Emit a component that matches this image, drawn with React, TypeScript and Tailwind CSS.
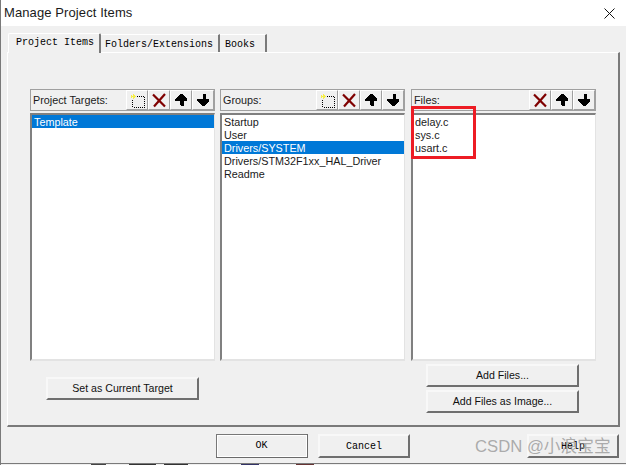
import React from 'react';

const sans = 'font-["Liberation_Sans",Arial,sans-serif]';
const mono = 'font-["Liberation_Mono","Noto_Sans_CJK_SC",monospace]';

const NewIcon = () => (
  <svg width="16" height="16" viewBox="0 0 16 16" shapeRendering="crispEdges">
    <path d="M6 4.5h9.5v10.5H3.5V8" fill="none" stroke="#000" strokeDasharray="1 1" />
    <path d="M4 2v5M1.5 4.5h5M2.5 3v1M5.5 3v1M2.5 5v1M5.5 5v1" fill="none" stroke="#f6ee4a" strokeWidth="1" />
  </svg>
);

const DeleteIcon = () => (
  <svg width="16" height="16" viewBox="0 0 16 16">
    <path d="M2 2.5L14 14.5M14 2L3 14.5" stroke="#7f0000" strokeWidth="2.2" fill="none" />
  </svg>
);

const UpIcon = () => (
  <svg width="14" height="14" viewBox="0 0 14 14" shapeRendering="crispEdges">
    <path d="M7 1h1l5 5v2H10v5H7v-1H6V8H1V6l1-1 1-1 1-1 1-1z" fill="#000" />
  </svg>
);

const DownIcon = () => (
  <svg width="14" height="14" viewBox="0 0 14 14" shapeRendering="crispEdges">
    <path d="M7 1h3v5h3v2l-5 5H7L1 8V6h6V2H7z" fill="#000" />
  </svg>
);

const ToolButton = ({ children }: { children: React.ReactNode }) => (
  <div className="w-[22px] h-[20px] flex items-center justify-center border-t border-l border-white border-r border-b border-r-[#a0a0a0] border-b-[#a0a0a0]">
    {children}
  </div>
);

const ListPanel = ({
  title,
  items,
  selected,
  canAdd = true,
  className = '',
}: {
  title: string;
  items: string[];
  selected?: string;
  canAdd?: boolean;
  className?: string;
}) => (
  <div className={`w-[185px] flex flex-col ${className}`}>
    <div className="h-[22px] flex items-center justify-between border border-[#a0a0a0] pl-[2px]">
      <span className="text-[10.8px] text-[#1a1a1a]">{title}</span>
      <div className="flex">
        {canAdd && (
          <ToolButton>
            <NewIcon />
          </ToolButton>
        )}
        <ToolButton>
          <DeleteIcon />
        </ToolButton>
        <ToolButton>
          <UpIcon />
        </ToolButton>
        <ToolButton>
          <DownIcon />
        </ToolButton>
      </div>
    </div>
    <div className="mt-[2px] h-[248px] bg-white border-t-2 border-l-2 border-r border-b-2 border-t-[#808080] border-l-[#808080] border-r-[#e3e3e3] border-b-[#e3e3e3]">
      {items.map((item) => (
        <div
          key={item}
          className={`h-[13px] leading-[14px] text-[10.8px] pl-[2px] whitespace-nowrap ${
            item === selected ? 'bg-[#0078d7] text-white' : 'text-[#1a1a1a]'
          }`}
        >
          {item}
        </div>
      ))}
    </div>
  </div>
);

const PushButton = ({ label, className = '' }: { label: string; className?: string }) => (
  <div
    className={`w-[153px] h-[23px] flex items-center justify-center border-2 border-t-[#f8f8f8] border-l-[#f8f8f8] border-r-[#6f6f6f] border-b-[#6f6f6f] text-[10.6px] text-[#111] ${className}`}
  >
    {label}
  </div>
);

const FooterButton = ({ label, strong, className = '' }: { label: string; strong?: boolean; className?: string }) => (
  <div
    className={`w-[92px] h-[24px] flex items-center justify-center text-[10px] text-black ${mono} ${
      strong
        ? 'border border-t-[#777] border-l-[#777] border-r-2 border-b-2 border-r-[#6a6a6a] border-b-[#6a6a6a] outline-1 -outline-offset-2 outline-white'
        : 'border-2 border-t-[#f8f8f8] border-l-[#f8f8f8] border-r-[#6f6f6f] border-b-[#6f6f6f]'
    } ${className}`}
  >
    {label}
  </div>
);

const App: React.FC = () => {
  return (
    <div className={`relative w-[626px] h-[465px] overflow-hidden flex flex-col bg-[#f0f0f0] border-l border-[#7a7a7a] ${sans}`}>
      {/* Title bar */}
      <div className="h-[26px] shrink-0 bg-white flex items-center justify-between pl-[3px] pr-[11px]">
        <span className="text-[13px] text-[#1a1a1a] tracking-[0.1px]">Manage Project Items</span>
        <svg width="11" height="11" viewBox="0 0 11 11">
          <path d="M0.5 0.5l10 10M10.5 0.5l-10 10" stroke="#111" strokeWidth="1" fill="none" />
        </svg>
      </div>

      {/* Tabs */}
      <div className={`ml-[7px] mt-[6px] h-[20px] shrink-0 flex items-end text-[10px] text-black ${mono}`}>
        <div className="w-[93px] h-[20px] -mb-px z-10 bg-[#f0f0f0] border-t border-l border-white border-r-2 border-r-[#7a7a7a] rounded-t-[2px] pl-[7px] pt-[1px]">
          Project Items
        </div>
        <div className="w-[119px] h-[18px] border-t border-white border-r-2 border-r-[#7a7a7a] pl-[4px] pt-[2px]">
          Folders/Extensions
        </div>
        <div className="w-[47px] h-[18px] border-t border-white border-r-2 border-r-[#7a7a7a] pl-[5px] pt-[2px]">
          Books
        </div>
      </div>

      {/* Tab page */}
      <div className="ml-[6px] mr-[6px] h-[375px] shrink-0 flex flex-col border-t border-l border-white border-r-2 border-b-2 border-r-[#7a7a7a] border-b-[#7a7a7a] pt-[36px] pl-[22px]">
        <div className="flex gap-[5px]">
          <ListPanel title="Project Targets:" items={['Template']} selected="Template" />
          <ListPanel
            title="Groups:"
            items={['Startup', 'User', 'Drivers/SYSTEM', 'Drivers/STM32F1xx_HAL_Driver', 'Readme']}
            selected="Drivers/SYSTEM"
          />
          <ListPanel title="Files:" items={['delay.c', 'sys.c', 'usart.c']} canAdd={false} className="ml-[1px]" />
        </div>
        <div className="flex mt-[3px]">
          <PushButton label="Set as Current Target" className="ml-[16px] mt-[13px]" />
          <div className="ml-[227px] flex flex-col gap-[3px]">
            <PushButton label="Add Files..." />
            <PushButton label="Add Files as Image..." />
          </div>
        </div>
      </div>

      {/* Footer buttons */}
      <div className="ml-[215px] mt-[7px] flex gap-[10px]">
        <FooterButton label="OK" strong />
        <FooterButton label="Cancel" />
        <FooterButton label="Help" className="ml-[107px]" />
      </div>

      {/* Window edge with what shows through below it */}
      <div className="mt-auto h-[2px] shrink-0 border-t border-[#7a7a7a] bg-[#f0f0f0] flex">
        <div className="ml-[90px] w-[15px] h-px bg-[#444]" />
        <div className="ml-[23px] w-[27px] h-px bg-[#333]" />
        <div className="ml-[8px] w-[24px] h-px bg-[#333]" />
        <div className="ml-[53px] w-[18px] h-px bg-[#336]" />
        <div className="ml-[37px] w-[18px] h-px bg-[#633]" />
      </div>

      {/* Red highlight around the file list */}
      <div className="absolute left-[410px] top-[106px] w-[65px] h-[53px] border-[3px] border-[#ed1c24]" />

      {/* Watermark */}
      <div className="absolute left-[474px] top-[437px] text-[16.7px] leading-[20px] text-[#8c8c8c]/70 font-['Liberation_Sans','Noto_Sans_CJK_SC',sans-serif] whitespace-nowrap">
        CSDN @小浪宝宝
      </div>
    </div>
  );
};

export default App;
